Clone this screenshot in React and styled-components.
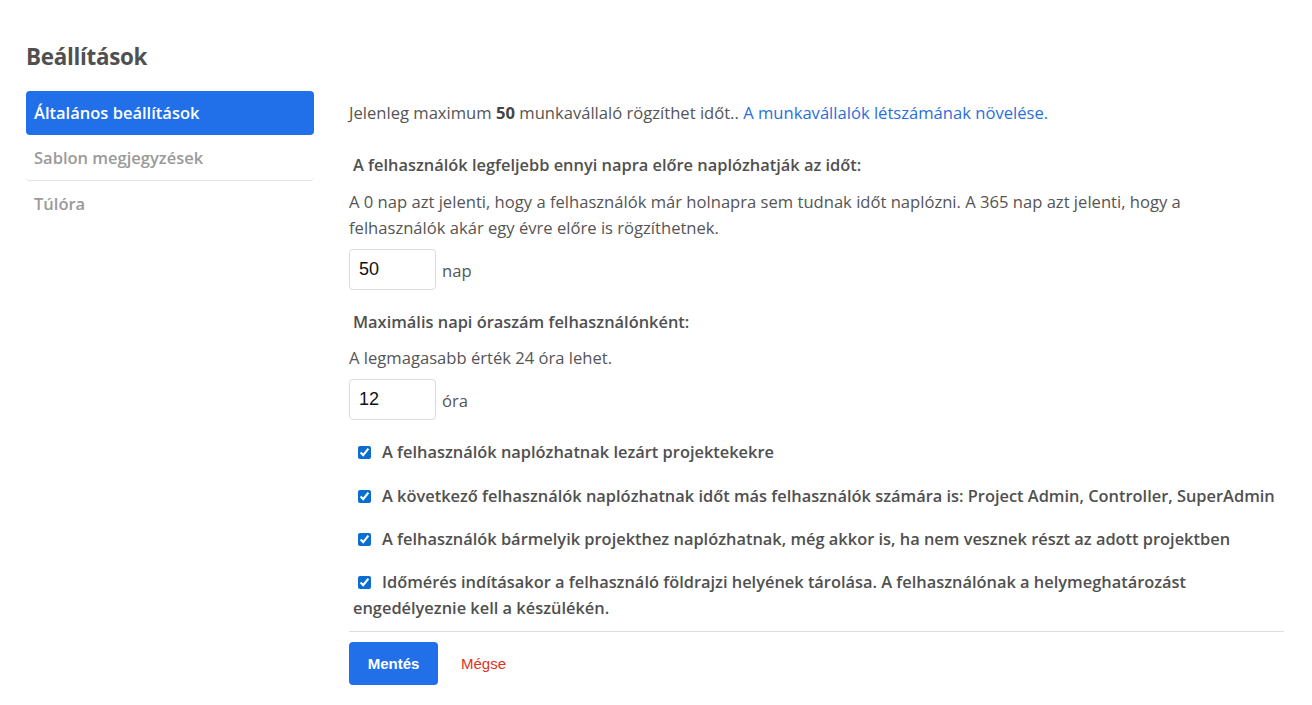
import React from "react";
import styled, { createGlobalStyle } from "styled-components";

const Global = createGlobalStyle`
  html, body { margin: 0; padding: 0; background: #fff; }
  body { font-family: "Open Sans", "Noto Sans", sans-serif; color: #555; }
  * { box-sizing: border-box; }
`;

const Page = styled.div`
  padding: 40px 28px 20px 26px;
`;

const Title = styled.h1`
  margin: 0 0 17px 0;
  font-size: 22.4px;
  line-height: 34px;
  font-weight: 700;
  color: #505050;
  letter-spacing: -0.3px;
`;

const Layout = styled.div`
  display: grid;
  grid-template-columns: 288px 1fr;
  gap: 35px;
`;

const Nav = styled.nav`
  display: flex;
  flex-direction: column;
`;

const NavItem = styled.a`
  display: block;
  height: ${(p) => (p.$active ? 44 : 46)}px;
  line-height: ${(p) => (p.$active ? 44 : 46)}px;
  padding: 0 8px;
  font-size: 16.5px;
  font-weight: 600;
  text-decoration: none;
  border-radius: 4px;
  color: ${(p) => (p.$active ? "#fff" : "#9a9a9a")};
  background: ${(p) => (p.$active ? "#2170ea" : "transparent")};
  border-bottom: ${(p) => (p.$divider ? "1px solid #e2e2e2" : "none")};
`;

const Main = styled.main`
  padding-top: 10px;
  font-size: 16.6px;
`;

const Info = styled.p`
  margin: 0 0 28px 0;
  line-height: 24px;
  b { font-weight: 700; color: #444; }
  a { color: #2a6fdb; text-decoration: none; }
`;

const Heading = styled.h3`
  margin: 0 0 ${(p) => p.$mb}px 0;
  padding-left: 4px;
  font-size: 16.4px;
  line-height: 24px;
  font-weight: 600;
  color: #505050;
`;

const Help = styled.p`
  margin: 0 0 8px 0;
  max-width: 922px;
  line-height: 26px;
`;

const FieldRow = styled.div`
  display: flex;
  align-items: center;
  gap: 6px;
  margin-bottom: ${(p) => p.$mb}px;
`;

const NumInput = styled.input`
  width: 87px;
  height: 41px;
  border: 1px solid #dcdcdc;
  border-radius: 4px;
  padding: 0 9px;
  font-family: "Liberation Sans", Arial, sans-serif;
  font-size: 18px;
  color: #111;
  outline: none;
`;

const Unit = styled.span`
  font-size: 16.6px;
  padding-top: 2px;
`;

const CheckLabel = styled.label`
  display: block;
  padding-left: 4px;
  font-size: 16.4px;
  font-weight: 600;
  color: #505050;
  line-height: 26px;
  margin-bottom: ${(p) => p.$mb}px;
`;

const Check = styled.input.attrs({ type: "checkbox" })`
  width: 13px;
  height: 13px;
  margin: 0 11px 0 5px;
  vertical-align: -1px;
  accent-color: #0a6ed1;
`;

const Divider = styled.hr`
  margin: 0;
  border: none;
  border-top: 1px solid #dedede;
`;

const Actions = styled.div`
  display: flex;
  align-items: center;
  gap: 23px;
  padding-top: 10px;
`;

const SaveButton = styled.button`
  width: 89px;
  height: 43px;
  border: none;
  border-radius: 4px;
  background: #2170ea;
  color: #fff;
  font-family: "Liberation Sans", Arial, sans-serif;
  font-weight: 700;
  font-size: 15px;
  cursor: pointer;
`;

const CancelButton = styled.button`
  border: none;
  background: none;
  padding: 0;
  color: #e2321d;
  font-family: "Liberation Sans", Arial, sans-serif;
  font-size: 15px;
  cursor: pointer;
`;

export default function App() {
  return (
    <>
      <Global />
      <Page>
        <Title>Beállítások</Title>
        <Layout>
          <Nav>
            <NavItem $active>Általános beállítások</NavItem>
            <NavItem $divider>Sablon megjegyzések</NavItem>
            <NavItem>Túlóra</NavItem>
          </Nav>
          <Main>
            <Info>
              Jelenleg maximum <b>50</b> munkavállaló rögzíthet időt..{" "}
              <a href="#">A munkavállalók létszámának növelése.</a>
            </Info>
            <Heading $mb={12}>A felhasználók legfeljebb ennyi napra előre naplózhatják az időt:</Heading>
            <Help>
              A 0 nap azt jelenti, hogy a felhasználók már holnapra sem tudnak időt naplózni. A 365 nap azt jelenti, hogy a felhasználók akár egy évre előre is rögzíthetnek.
            </Help>
            <FieldRow $mb={20}>
              <NumInput defaultValue="50" />
              <Unit>nap</Unit>
            </FieldRow>
            <Heading $mb={11}>Maximális napi óraszám felhasználónként:</Heading>
            <Help>A legmagasabb érték 24 óra lehet.</Help>
            <FieldRow $mb={19}>
              <NumInput defaultValue="12" />
              <Unit>óra</Unit>
            </FieldRow>
            <CheckLabel $mb={18}>
              <Check defaultChecked />A felhasználók naplózhatnak lezárt projektekekre
            </CheckLabel>
            <CheckLabel $mb={17}>
              <Check defaultChecked />A következő felhasználók naplózhatnak időt más felhasználók számára is: Project Admin, Controller, SuperAdmin
            </CheckLabel>
            <CheckLabel $mb={17}>
              <Check defaultChecked />A felhasználók bármelyik projekthez naplózhatnak, még akkor is, ha nem vesznek részt az adott projektben
            </CheckLabel>
            <CheckLabel $mb={10}>
              <Check defaultChecked />Időmérés indításakor a felhasználó földrajzi helyének tárolása. A felhasználónak a helymeghatározást engedélyeznie kell a készülékén.
            </CheckLabel>
            <Divider />
            <Actions>
              <SaveButton>Mentés</SaveButton>
              <CancelButton>Mégse</CancelButton>
            </Actions>
          </Main>
        </Layout>
      </Page>
    </>
  );
}
